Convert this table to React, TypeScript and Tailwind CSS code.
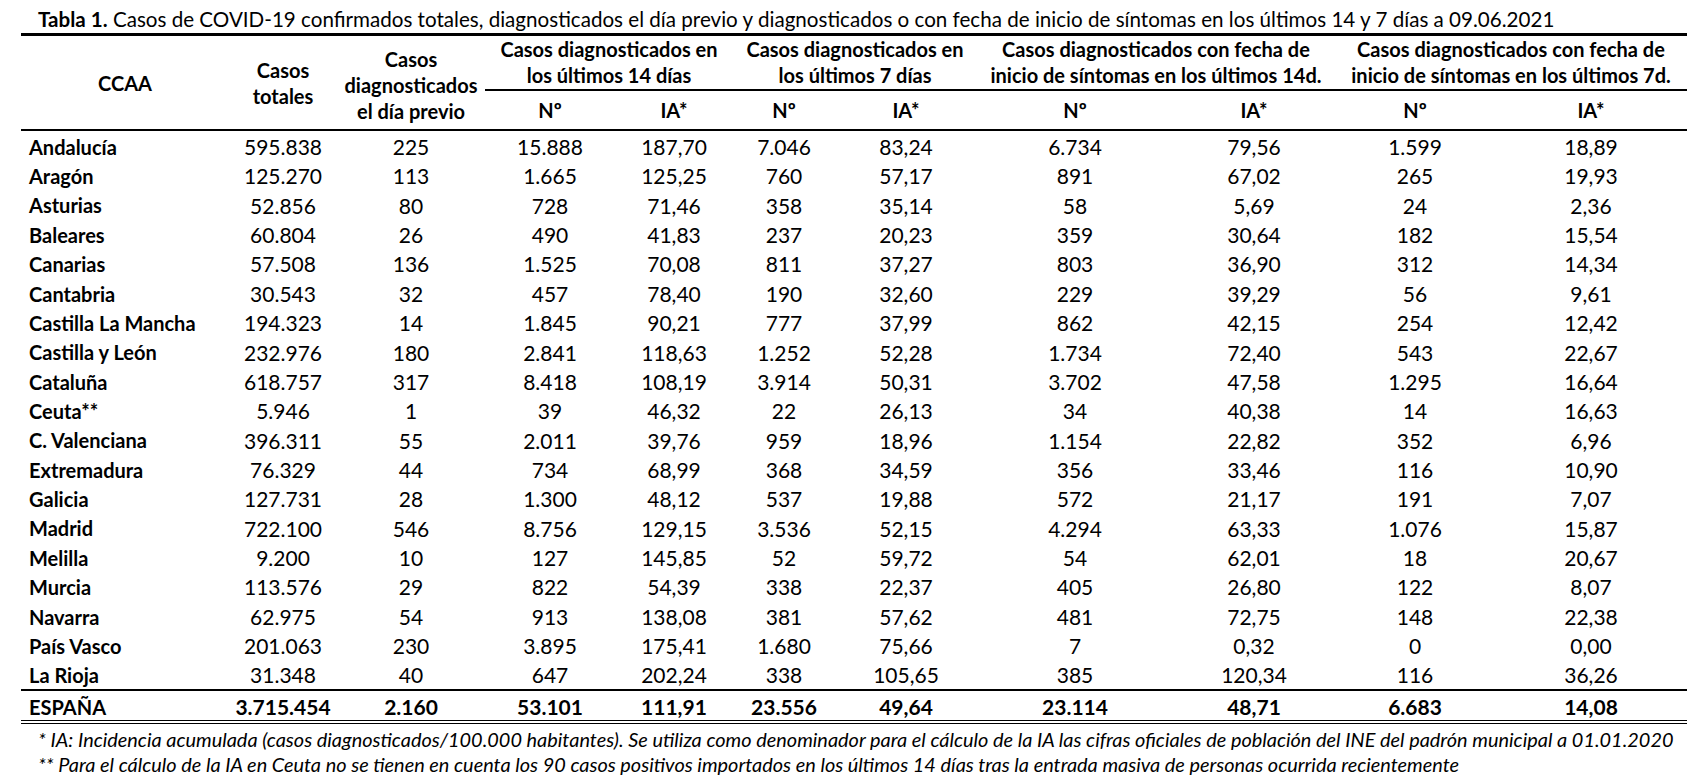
const cols =
  "grid grid-cols-[208px_108px_148px_130px_118px_102px_142px_196px_162px_160px_192px]";

const rows = [
  ["Andalucía", "595.838", "225", "15.888", "187,70", "7.046", "83,24", "6.734", "79,56", "1.599", "18,89"],
  ["Aragón", "125.270", "113", "1.665", "125,25", "760", "57,17", "891", "67,02", "265", "19,93"],
  ["Asturias", "52.856", "80", "728", "71,46", "358", "35,14", "58", "5,69", "24", "2,36"],
  ["Baleares", "60.804", "26", "490", "41,83", "237", "20,23", "359", "30,64", "182", "15,54"],
  ["Canarias", "57.508", "136", "1.525", "70,08", "811", "37,27", "803", "36,90", "312", "14,34"],
  ["Cantabria", "30.543", "32", "457", "78,40", "190", "32,60", "229", "39,29", "56", "9,61"],
  ["Castilla La Mancha", "194.323", "14", "1.845", "90,21", "777", "37,99", "862", "42,15", "254", "12,42"],
  ["Castilla y León", "232.976", "180", "2.841", "118,63", "1.252", "52,28", "1.734", "72,40", "543", "22,67"],
  ["Cataluña", "618.757", "317", "8.418", "108,19", "3.914", "50,31", "3.702", "47,58", "1.295", "16,64"],
  ["Ceuta**", "5.946", "1", "39", "46,32", "22", "26,13", "34", "40,38", "14", "16,63"],
  ["C. Valenciana", "396.311", "55", "2.011", "39,76", "959", "18,96", "1.154", "22,82", "352", "6,96"],
  ["Extremadura", "76.329", "44", "734", "68,99", "368", "34,59", "356", "33,46", "116", "10,90"],
  ["Galicia", "127.731", "28", "1.300", "48,12", "537", "19,88", "572", "21,17", "191", "7,07"],
  ["Madrid", "722.100", "546", "8.756", "129,15", "3.536", "52,15", "4.294", "63,33", "1.076", "15,87"],
  ["Melilla", "9.200", "10", "127", "145,85", "52", "59,72", "54", "62,01", "18", "20,67"],
  ["Murcia", "113.576", "29", "822", "54,39", "338", "22,37", "405", "26,80", "122", "8,07"],
  ["Navarra", "62.975", "54", "913", "138,08", "381", "57,62", "481", "72,75", "148", "22,38"],
  ["País Vasco", "201.063", "230", "3.895", "175,41", "1.680", "75,66", "7", "0,32", "0", "0,00"],
  ["La Rioja", "31.348", "40", "647", "202,24", "338", "105,65", "385", "120,34", "116", "36,26"],
];

const total = ["ESPAÑA", "3.715.454", "2.160", "53.101", "111,91", "23.556", "49,64", "23.114", "48,71", "6.683", "14,08"];

// group headings over the Nº / IA* pairs
const groups = [
  ["Casos diagnosticados en", "los últimos 14 días"],
  ["Casos diagnosticados en", "los últimos 7 días"],
  ["Casos diagnosticados con fecha de", "inicio de síntomas en los últimos 14d."],
  ["Casos diagnosticados con fecha de", "inicio de síntomas en los últimos 7d."],
];

function DataRow({ cells, bold, height }: { cells: string[]; bold?: boolean; height: string }) {
  return (
    <div className={`${cols} ${height} items-center text-[21px] ${bold ? "font-bold" : ""}`}>
      {cells.map((c, i) =>
        i === 0 ? (
          <div key={i} className="pl-[8px] text-[20px] font-bold whitespace-nowrap">
            {c}
          </div>
        ) : (
          <div key={i} className="text-center">
            {c}
          </div>
        )
      )}
    </div>
  );
}

export default function App() {
  return (
    <div className="w-[1694px] h-[784px] bg-white text-black font-[Lato,sans-serif] overflow-hidden">
      <div className="ml-[21px] w-[1666px]">
        {/* title */}
        <div className="h-[36px] pt-[7px] pl-[17px] text-[20.6px] leading-[24px] whitespace-nowrap border-b-[3px] border-black">
          <span className="font-bold">Tabla 1.</span> Casos de COVID-19 confirmados totales, diagnosticados el día
          previo y diagnosticados o con fecha de inicio de síntomas en los últimos 14 y 7 días a 09.06.2021
        </div>

        {/* header */}
        <div className={`${cols} grid-rows-[55px_38px] border-b-2 border-black font-bold text-[20px] leading-[26px]`}>
          <div className="row-span-2 flex items-center justify-center">CCAA</div>
          <div className="row-span-2 flex items-center justify-center text-center">
            Casos
            <br />
            totales
          </div>
          <div className="row-span-2 flex items-center justify-center text-center pt-[4px]">
            Casos
            <br />
            diagnosticados
            <br />
            el día previo
          </div>
          {groups.map((g, i) => (
            <div
              key={i}
              className="col-span-2 flex flex-col items-center justify-center border-b-2 border-black whitespace-nowrap pb-[2px]"
            >
              <div>{g[0]}</div>
              <div>{g[1]}</div>
            </div>
          ))}
          {groups.map((_, i) => [
            <div key={`n${i}`} className="flex items-center justify-center">
              Nº
            </div>,
            <div key={`ia${i}`} className="flex items-center justify-center">
              IA*
            </div>,
          ])}
        </div>

        {/* body */}
        <div className="border-b-2 border-black">
          {rows.map((r) => (
            <DataRow key={r[0]} cells={r} height="h-[29.37px]" />
          ))}
        </div>
        <DataRow cells={total} bold height="h-[29px]" />
        <div className="h-[4px] border-y border-black" />
      </div>

      {/* footnotes */}
      <div className="pl-[38px] pt-[3px] italic text-[19.9px] leading-[25px] whitespace-nowrap">
        <div>
          * IA: Incidencia acumulada (casos diagnosticados/100.000 habitantes). Se utiliza como denominador para el
          cálculo de la IA las cifras oficiales de población del INE del padrón municipal a 01.01.2020
        </div>
        <div>
          ** Para el cálculo de la IA en Ceuta no se tienen en cuenta los 90 casos positivos importados en los últimos
          14 días tras la entrada masiva de personas ocurrida recientemente
        </div>
      </div>
    </div>
  );
}
